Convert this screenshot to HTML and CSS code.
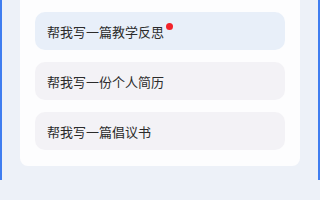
FILE: index.html
```html
<!DOCTYPE html>
<html lang="zh">
<head>
<meta charset="utf-8">
<link rel="stylesheet" href="styles.css">
</head>
<body>
<div class="frame">
  <div class="card">
    <div class="item item-active"><span class="label">帮我写一篇教学反思</span><span class="dot"></span></div>
    <div class="item"><span class="label">帮我写一份个人简历</span></div>
    <div class="item"><span class="label">帮我写一篇倡议书</span></div>
  </div>
</div>
</body>
</html>
```
FILE: styles.css
```css
html, body {
  margin: 0;
  padding: 0;
}
body {
  width: 320px;
  height: 200px;
  overflow: hidden;
  background: #edf1f8;
  font-family: "Noto Sans CJK SC", "Noto Sans", sans-serif;
}
.frame {
  box-sizing: border-box;
  width: 320px;
  height: 200px;
  border-left: 2px solid #3f7df0;
  border-right: 2px solid #3f7df0;
  padding-left: 18px;
}
.card {
  box-sizing: border-box;
  width: 280px;
  margin-top: -20px;
  padding: 32px 15px 16px;
  background: #fdfdfe;
  border-radius: 8px;
  display: flex;
  flex-direction: column;
  gap: 12px;
}
.item {
  height: 38px;
  border-radius: 10px;
  background: #f3f2f6;
  display: flex;
  align-items: center;
  padding-left: 12px;
  position: relative;
}
.item-active {
  background: #e8eff9;
}
.label {
  font-size: 13px;
  color: #2b2b2b;
  line-height: 1;
}
.dot {
  position: absolute;
  left: 131px;
  top: 11px;
  width: 7px;
  height: 7px;
  border-radius: 50%;
  background: #f2222a;
}
```
